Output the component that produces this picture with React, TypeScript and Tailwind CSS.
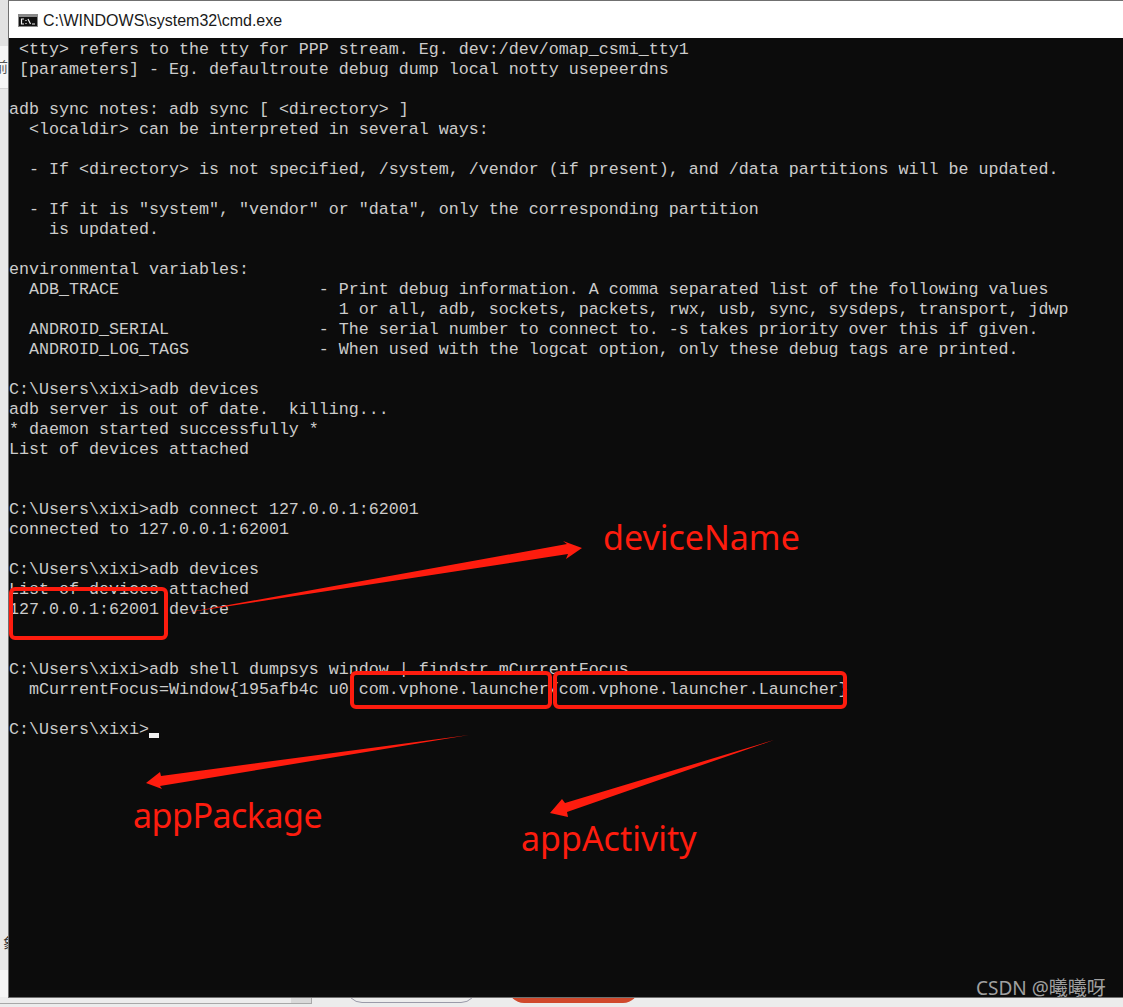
const lines = [
  " <tty> refers to the tty for PPP stream. Eg. dev:/dev/omap_csmi_tty1",
  " [parameters] - Eg. defaultroute debug dump local notty usepeerdns",
  "",
  "adb sync notes: adb sync [ <directory> ]",
  "  <localdir> can be interpreted in several ways:",
  "",
  "  - If <directory> is not specified, /system, /vendor (if present), and /data partitions will be updated.",
  "",
  '  - If it is "system", "vendor" or "data", only the corresponding partition',
  "    is updated.",
  "",
  "environmental variables:",
  "  ADB_TRACE                    - Print debug information. A comma separated list of the following values",
  "                                 1 or all, adb, sockets, packets, rwx, usb, sync, sysdeps, transport, jdwp",
  "  ANDROID_SERIAL               - The serial number to connect to. -s takes priority over this if given.",
  "  ANDROID_LOG_TAGS             - When used with the logcat option, only these debug tags are printed.",
  "",
  "C:\\Users\\xixi>adb devices",
  "adb server is out of date.  killing...",
  "* daemon started successfully *",
  "List of devices attached",
  "",
  "",
  "C:\\Users\\xixi>adb connect 127.0.0.1:62001",
  "connected to 127.0.0.1:62001",
  "",
  "C:\\Users\\xixi>adb devices",
  "List of devices attached",
  "127.0.0.1:62001 device",
  "",
  "",
  "C:\\Users\\xixi>adb shell dumpsys window | findstr mCurrentFocus",
  "  mCurrentFocus=Window{195afb4c u0 com.vphone.launcher/com.vphone.launcher.Launcher}",
  "",
];

const ink = "#fe1c0e";

function Annotations() {
  return (
    <>
      <svg className="absolute left-0 top-0" width="1123" height="1007" viewBox="0 0 1123 1007">
        <polygon points="184,613 567,544 563,541 582,548 566,559 568,554" fill={ink} />
        <polygon points="469,735 161,776 160,772 146,783 162,789 160,786" fill={ink} />
        <polygon points="774,740 565,803 562,799 550,813 568,817 567,812" fill={ink} />
      </svg>
      <div className="absolute left-[9px] top-[587px] w-[159px] h-[53px] rounded-md border-4 border-[#fe1c0e]" />
      <div className="absolute left-[350px] top-[671px] w-[202px] h-[38px] rounded-md border-4 border-[#fe1c0e]" />
      <div className="absolute left-[553px] top-[671px] w-[294px] h-[38px] rounded-md border-4 border-[#fe1c0e]" />
      <span className="absolute left-[603px] top-[514px] text-[34px] leading-[46px] text-[#fe1c0e] font-['Noto_Sans','sans-serif']">deviceName</span>
      <span className="absolute left-[133px] top-[792px] text-[34px] tracking-[-0.5px] leading-[46px] text-[#fe1c0e] font-['Noto_Sans','sans-serif']">appPackage</span>
      <span className="absolute left-[521px] top-[815px] text-[34px] leading-[46px] text-[#fe1c0e] font-['Noto_Sans','sans-serif']">appActivity</span>
    </>
  );
}

function CmdIcon() {
  return (
    <svg width="20" height="13" viewBox="0 0 20 13">
      <rect width="20" height="13" fill="#8a8a8a" />
      <rect x="1" y="3" width="18" height="9" fill="#111" />
      <path d="M6 5H3.5V10H6M8 6V7M8 9V10M10 5L12.5 10M14 10H17" stroke="#eee" strokeWidth="1.2" fill="none" />
    </svg>
  );
}

// the other windows peeking out behind the terminal
function Backdrop() {
  return (
    <>
      <div className="absolute left-0 top-0 w-[312px] h-[1004px] flex flex-col border-r border-b border-[#a8a8a8] overflow-hidden font-['Noto_Sans_CJK_SC','sans-serif']">
        <div className="h-[46px] bg-[#e2e2e2]" />
        <div className="h-[43px] bg-[#f6f6f6] border-b border-[#d4d4d4] text-[14px] leading-[40px] text-[#555] -indent-[6px]">前</div>
        <div className="flex-1 bg-[#e8e8e8]" />
        <div className="h-[27px] bg-[#f5f5f5]" />
        <div className="h-[6px] flex justify-end bg-[#ececec]">
          <div className="w-5 bg-[#d9d9d9]" />
        </div>
      </div>
      <span className="absolute left-[3px] top-[934px] text-[14px] leading-[16px] text-[#333] font-['Noto_Sans_CJK_SC','sans-serif']">象</span>
      <div className="absolute left-[346px] top-[960px] w-[131px] h-[43px] rounded-b-2xl border border-[#9a9aa8]" />
      <div className="absolute left-[508px] top-[960px] w-[131px] h-[43px] rounded-b-2xl bg-[#d0492c]" />
    </>
  );
}

export default function App() {
  return (
    <div className="relative w-[1123px] h-[1007px] overflow-hidden bg-[#ececec] pl-2">
      <Backdrop />

      {/* cmd window */}
      <div className="relative w-full h-[998px] flex flex-col border-t border-l border-b border-[#707070]">
        <div className="h-[37px] shrink-0 bg-white flex items-center pl-[9px] pt-[2px] gap-[5px]">
          <CmdIcon />
          <span className="text-[16px] text-[#1a1a1a] font-['Liberation_Sans','sans-serif']">C:\WINDOWS\system32\cmd.exe</span>
        </div>
        <div className="flex-1 pt-[2px] bg-[#0c0c0c] text-[#cccccc] text-[16.67px] leading-[20px] whitespace-pre font-['Liberation_Mono','monospace']">
          {lines.map((line, i) => (
            <div key={i} className="h-5">{line}</div>
          ))}
          <div className="h-5 flex">
            <span>C:\Users\xixi&gt;</span>
            <span className="w-[10px] h-[5px] mt-[13px] bg-[#f2f2f2]" />
          </div>
        </div>
      </div>

      <Annotations />

      <span className="absolute left-[976px] top-[976px] text-[19px] leading-[24px] text-[#a0a0a0] font-['Noto_Sans','Noto_Sans_CJK_SC','sans-serif']">CSDN @曦曦呀</span>
    </div>
  );
}
